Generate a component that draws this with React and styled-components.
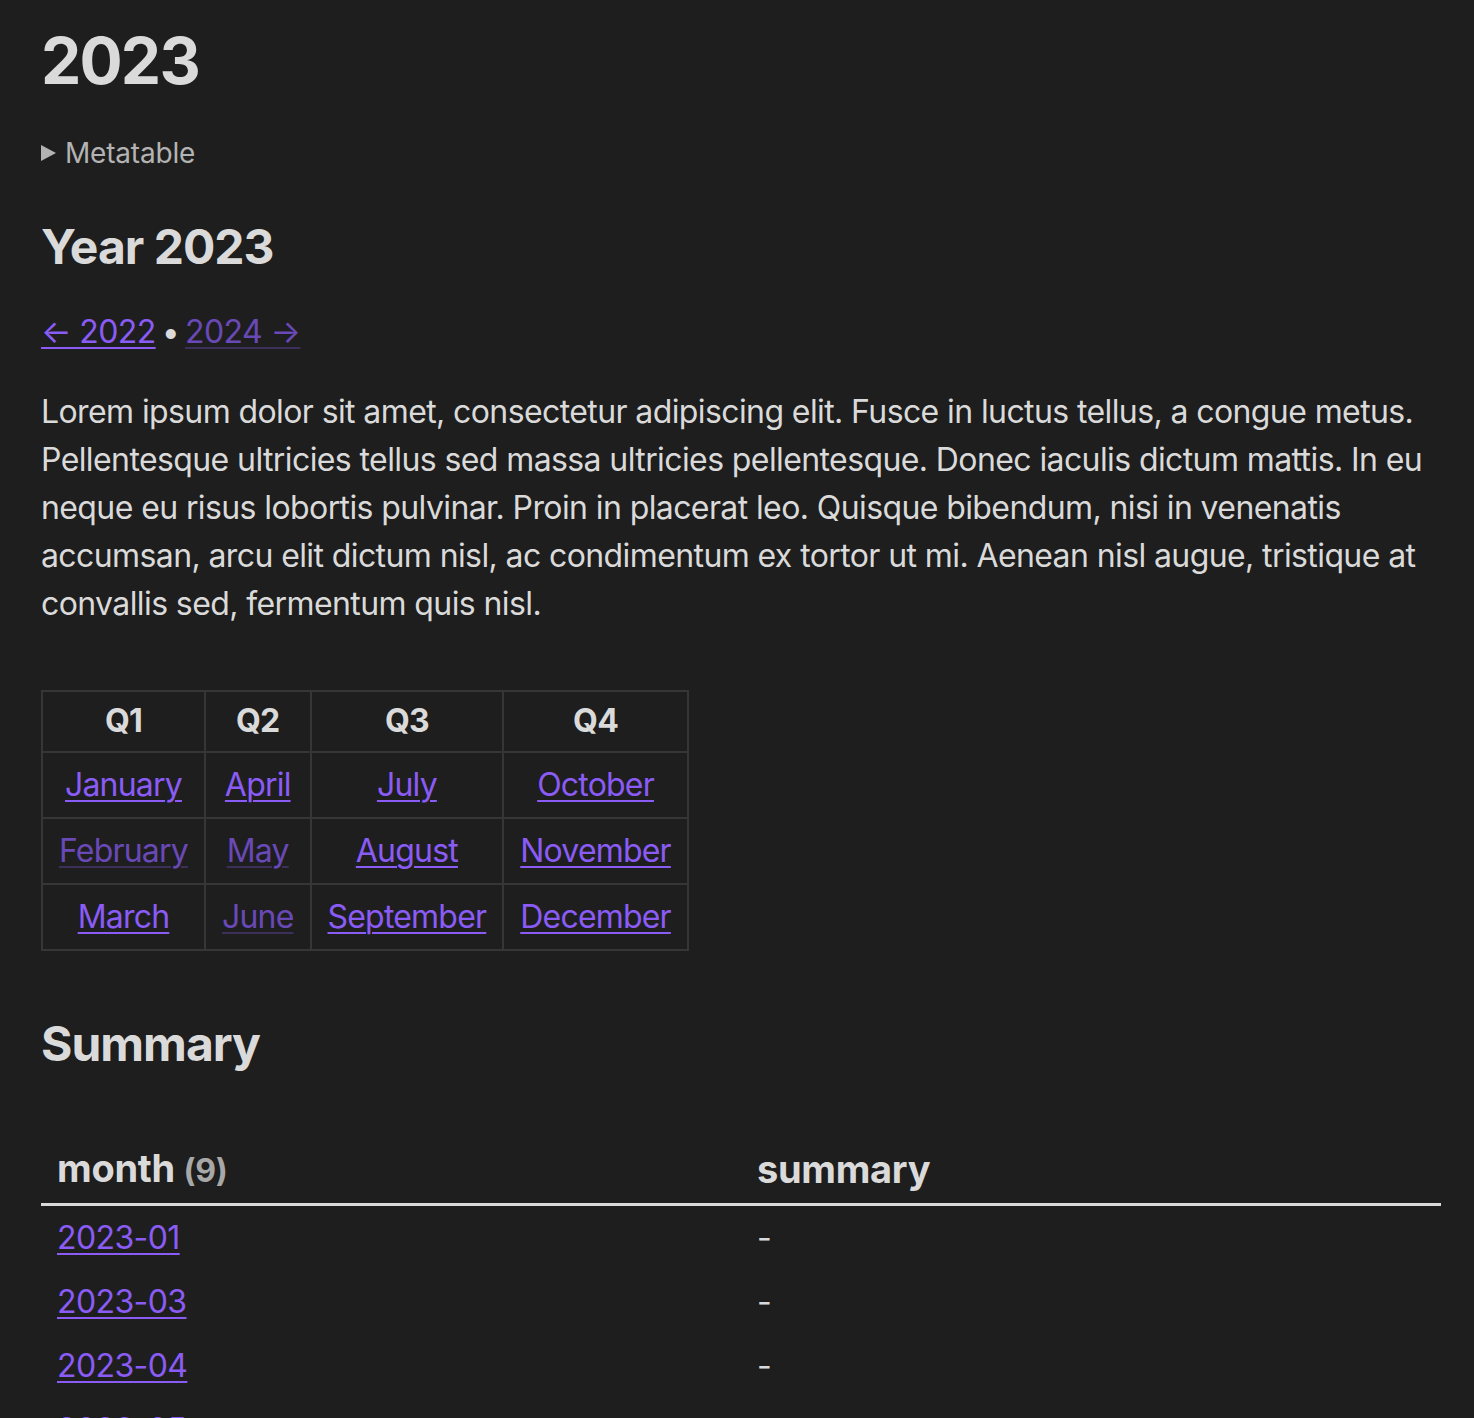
import React from 'react';
import styled, { createGlobalStyle } from 'styled-components';

const Global = createGlobalStyle`
  html, body {
    margin: 0;
    padding: 0;
    background: #1e1e1e;
  }
  body {
    font-family: Inter, "Noto Sans", sans-serif;
    color: #dadada;
  }
`

const Page = styled.div`
  min-height: 100vh;
  padding: 23px 33px 0 41px;
  box-sizing: border-box;
`

const Title = styled.h1`
  margin: 0;
  font-size: 64px;
  font-weight: 700;
  line-height: 1.2;
  letter-spacing: -1.8px;
  color: #dadada;
`

const Meta = styled.div`
  display: flex;
  align-items: center;
  gap: 9px;
  margin-top: 32px;
  font-size: 28px;
  line-height: 1.5;
  letter-spacing: -0.2px;
  color: #b3b3b3;
`

const Caret = styled.span`
  width: 0;
  height: 0;
  border-top: 8px solid transparent;
  border-bottom: 8px solid transparent;
  border-left: 15px solid #b3b3b3;
`

const Heading = styled.h2`
  margin: ${p => p.top}px 0 0;
  font-size: 48px;
  font-weight: 700;
  line-height: 1.2;
  letter-spacing: -1px;
  color: #dadada;
`

const Text = styled.p`
  margin: ${p => p.top}px 0 0;
  font-size: 32px;
  line-height: 48px;
  letter-spacing: -0.6px;
  color: #dadada;
`

const Link = styled.a`
  color: #8a5cf5;
  text-decoration: underline;
  text-decoration-thickness: 2px;
  text-underline-offset: 4px;
  opacity: ${p => (p.unresolved ? 0.7 : 1)};
  text-decoration-color: ${p => (p.unresolved ? 'rgba(138, 92, 245, 0.4)' : '#8a5cf5')};
`

const Dot = styled.span`
  color: #dadada;
  margin: 0 6px;
`

const Quarters = styled.table`
  margin-top: 62px;
  border-collapse: collapse;
  font-size: 32px;
  line-height: 48px;
  letter-spacing: -0.8px;
`

const QHead = styled.th`
  border: 2px solid #363636;
  padding: 5px 24px 6px;
  font-weight: 700;
  text-align: center;
  color: #dadada;
`

const QCell = styled.td`
  border: 2px solid #363636;
  padding: 8px 16px;
  text-align: center;
`

const DataTable = styled.table`
  margin-top: 59px;
  width: 100%;
  border-collapse: collapse;
  font-size: 32px;
  line-height: 48px;
  letter-spacing: -0.6px;
`

const DHead = styled.th`
  text-align: left;
  padding: 12px 16px 8px;
  font-size: 38px;
  font-weight: 700;
  letter-spacing: -0.3px;
  color: #dadada;
  border-bottom: 3px solid #dadada;
  width: ${p => p.w || 'auto'};
`

const Count = styled.span`
  font-size: 32px;
  color: #a8a8a8;
`

const DCell = styled.td`
  padding: 8px 16px;
  color: #dadada;
`

const quarters = [
  [['January'], ['April'], ['July'], ['October']],
  [['February', true], ['May', true], ['August'], ['November']],
  [['March'], ['June', true], ['September'], ['December']],
];

const months = ['2023-01', '2023-03', '2023-04', '2023-05'];

export default function App() {
  return (
    <Page>
      <Global />
      <Title>2023</Title>
      <Meta>
        <Caret />
        Metatable
      </Meta>
      <Heading top={44}>Year 2023</Heading>
      <Text top={33}>
        <Link href="#">← 2022</Link>
        <Dot>•</Dot>
        <Link href="#" unresolved>2024 →</Link>
      </Text>
      <Text top={32}>
        Lorem ipsum dolor sit amet, consectetur adipiscing elit. Fusce in luctus tellus, a congue metus.
        Pellentesque ultricies tellus sed massa ultricies pellentesque. Donec iaculis dictum mattis. In eu
        neque eu risus lobortis pulvinar. Proin in placerat leo. Quisque bibendum, nisi in venenatis
        accumsan, arcu elit dictum nisl, ac condimentum ex tortor ut mi. Aenean nisl augue, tristique at
        convallis sed, fermentum quis nisl.
      </Text>
      <Quarters>
        <thead>
          <tr>
            <QHead>Q1</QHead>
            <QHead>Q2</QHead>
            <QHead>Q3</QHead>
            <QHead>Q4</QHead>
          </tr>
        </thead>
        <tbody>
          {quarters.map((row, i) => (
            <tr key={i}>
              {row.map(([name, unresolved]) => (
                <QCell key={name}>
                  <Link href="#" unresolved={unresolved}>{name}</Link>
                </QCell>
              ))}
            </tr>
          ))}
        </tbody>
      </Quarters>
      <Heading top={64}>Summary</Heading>
      <DataTable>
        <thead>
          <tr>
            <DHead w="50%">month <Count>(9)</Count></DHead>
            <DHead>summary</DHead>
          </tr>
        </thead>
        <tbody>
          {months.map(m => (
            <tr key={m}>
              <DCell><Link href="#">{m}</Link></DCell>
              <DCell>-</DCell>
            </tr>
          ))}
        </tbody>
      </DataTable>
    </Page>
  );
}
